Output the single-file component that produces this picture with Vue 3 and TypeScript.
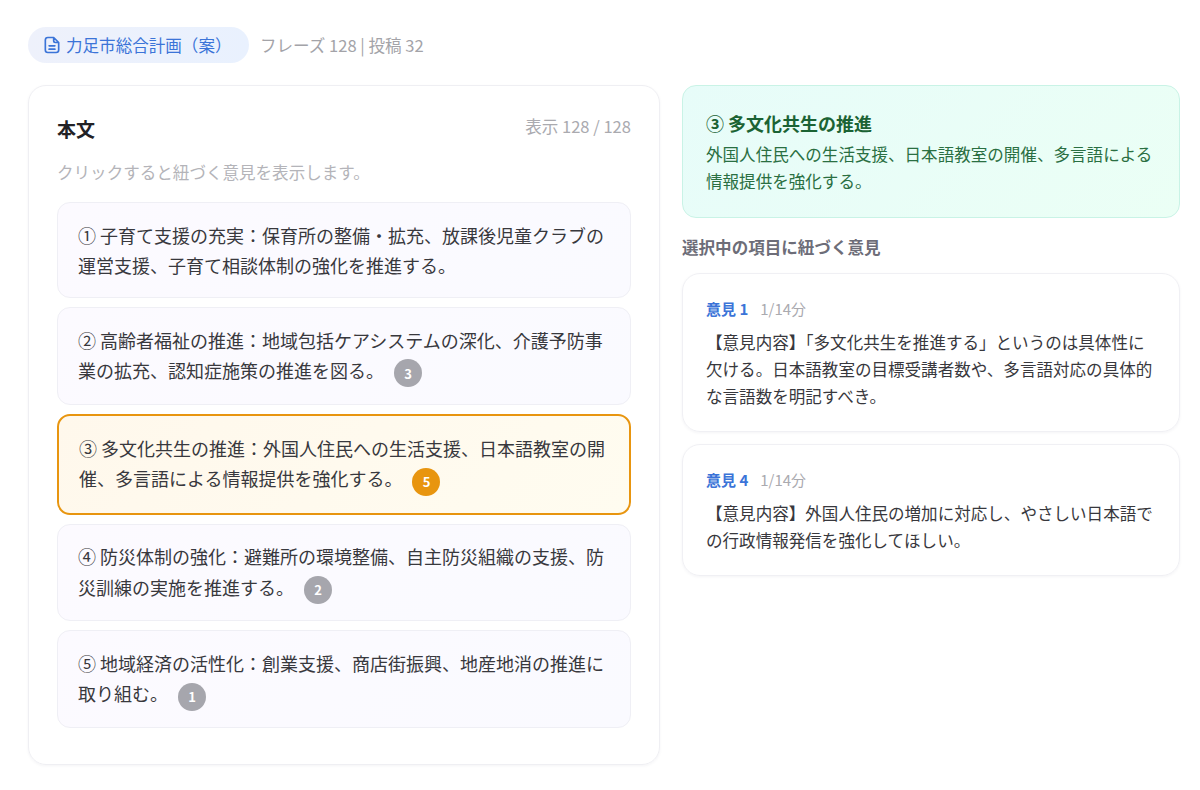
<template>
  <div class="page">
    <header class="top">
      <div class="doc-pill">
        <svg class="doc-icon" viewBox="0 0 24 24">
          <path
            d="M14 3H7a3 3 0 0 0-3 3v12a3 3 0 0 0 3 3h10a3 3 0 0 0 3-3V9z M14 3v4a2 2 0 0 0 2 2h4 M8.5 13h7 M8.5 17h7"
            fill="none"
            stroke="currentColor"
            stroke-width="2"
            stroke-linecap="round"
            stroke-linejoin="round"
          />
        </svg>
        <span>力足市総合計画（案）</span>
      </div>
      <span class="stats">フレーズ 128 | 投稿 32</span>
    </header>

    <main class="columns">
      <section class="body-card">
        <div class="body-head">
          <h2>本文</h2>
          <span class="count">表示 128 / 128</span>
        </div>
        <p class="hint">クリックすると紐づく意見を表示します。</p>

        <div class="phrases">
          <div
            v-for="phrase in PHRASES"
            :key="phrase.id"
            class="phrase"
            :class="{ selected: phrase.id === selectedId }"
          >
            {{ phrase.text }}<span v-if="phrase.count" class="badge">{{ phrase.count }}</span>
          </div>
        </div>
      </section>

      <aside class="side">
        <div class="summary">
          <h3>③ 多文化共生の推進</h3>
          <p>外国人住民への生活支援、日本語教室の開催、多言語による情報提供を強化する。</p>
        </div>

        <h4 class="side-title">選択中の項目に紐づく意見</h4>

        <article v-for="op in OPINIONS" :key="op.label" class="opinion">
          <div class="opinion-head">
            <span class="opinion-label">{{ op.label }}</span>
            <span class="opinion-time">{{ op.time }}</span>
          </div>
          <p>{{ op.text }}</p>
        </article>
      </aside>
    </main>
  </div>
</template>

<script setup lang="ts">
const selectedId = 3;

const PHRASES = [
  { id: 1, text: '① 子育て支援の充実：保育所の整備・拡充、放課後児童クラブの運営支援、子育て相談体制の強化を推進する。', count: 0 },
  { id: 2, text: '② 高齢者福祉の推進：地域包括ケアシステムの深化、介護予防事業の拡充、認知症施策の推進を図る。', count: 3 },
  { id: 3, text: '③ 多文化共生の推進：外国人住民への生活支援、日本語教室の開催、多言語による情報提供を強化する。', count: 5 },
  { id: 4, text: '④ 防災体制の強化：避難所の環境整備、自主防災組織の支援、防災訓練の実施を推進する。', count: 2 },
  { id: 5, text: '⑤ 地域経済の活性化：創業支援、商店街振興、地産地消の推進に取り組む。', count: 1 }
];

const OPINIONS = [
  {
    label: '意見 1',
    time: '1/14分',
    text: '【意見内容】「多文化共生を推進する」というのは具体性に欠ける。日本語教室の目標受講者数や、多言語対応の具体的な言語数を明記すべき。'
  },
  {
    label: '意見 4',
    time: '1/14分',
    text: '【意見内容】外国人住民の増加に対応し、やさしい日本語での行政情報発信を強化してほしい。'
  }
];
</script>

<style>
html,
body {
  background: #fff;
}
</style>

<style scoped>
.page {
  width: 1200px;
  height: 790px;
  box-sizing: border-box;
  padding: 27px 20px 0 28px;
  font-family: "Noto Sans CJK JP", "Noto Sans", sans-serif;
  color: #333338;
  overflow: hidden;
}

.top {
  display: flex;
  align-items: center;
  gap: 11px;
  height: 36px;
}

.doc-pill {
  box-sizing: border-box;
  display: flex;
  align-items: center;
  gap: 4px;
  width: 221px;
  height: 36px;
  padding-left: 14px;
  border-radius: 18px;
  background: linear-gradient(90deg, #eef1fb, #e9f1fe);
  color: #3b74d8;
  font-size: 16.56px;
}

.doc-icon {
  width: 20px;
  height: 20px;
}

.stats {
  font-size: 16.56px;
  color: #a3a3a8;
}

.columns {
  display: flex;
  align-items: flex-start;
  gap: 22px;
  margin-top: 22px;
}

.body-card {
  box-sizing: border-box;
  width: 632px;
  height: 680px;
  padding: 28px 28px 0;
  border: 1px solid #efeff3;
  border-radius: 18px;
  box-shadow: 0 1px 3px rgba(40, 40, 80, 0.05);
}

.body-head {
  display: flex;
  justify-content: space-between;
  align-items: flex-start;
}

.body-head h2 {
  margin: 0;
  font-size: 19px;
  line-height: 30px;
  font-weight: 700;
  color: #222226;
}

.count {
  font-size: 16.56px;
  line-height: 24px;
  color: #aaaaaf;
}

.hint {
  margin: 16px 0 0;
  font-size: 16.56px;
  line-height: 24px;
  color: #b4b4b9;
}

.phrases {
  display: flex;
  flex-direction: column;
  gap: 9px;
  margin-top: 18px;
}

.phrase {
  box-sizing: border-box;
  padding: 16.5px 20px;
  border: 1px solid #efeff5;
  border-radius: 13px;
  background: linear-gradient(135deg, #fcfaff, #fafaff);
  font-size: 18px;
  line-height: 30.6px;
  color: #38383d;
}

.phrase.selected {
  padding: 17px 20px;
  border: 2px solid #e8950f;
  background: linear-gradient(135deg, #fff8ec, #fffcf0);
}

.badge {
  display: inline-flex;
  align-items: center;
  justify-content: center;
  width: 28px;
  height: 28px;
  margin-left: 10px;
  border-radius: 50%;
  background: #a6a6ad;
  color: #fff;
  font-size: 13px;
  font-weight: 700;
  line-height: 1;
  vertical-align: middle;
}

.phrase.selected .badge {
  background: #e8950f;
}

.side {
  flex: 1;
  min-width: 0;
}

.summary {
  box-sizing: border-box;
  height: 133px;
  padding: 24px 23px;
  border: 1px solid #c9f3e6;
  border-radius: 14px;
  background: linear-gradient(135deg, #e7fcf9, #ebfff5);
  color: #2a6f42;
}

.summary h3 {
  margin: 0;
  font-size: 18px;
  line-height: 26px;
  font-weight: 700;
  color: #1b6334;
}

.summary p {
  margin: 5px 0 0;
  font-size: 16.56px;
  line-height: 27px;
}

.side-title {
  margin: 17px 0 0;
  font-size: 16.56px;
  line-height: 24px;
  font-weight: 600;
  color: #6d6d78;
}

.opinion {
  box-sizing: border-box;
  padding: 22px 23px 21px;
  margin-top: 12px;
  border: 1px solid #f0f0f4;
  border-radius: 18px;
  box-shadow: 0 1px 3px rgba(40, 40, 80, 0.05);
}

.side-title + .opinion {
  margin-top: 14px;
}

.opinion-head {
  display: flex;
  align-items: center;
  gap: 12px;
  height: 24px;
}

.opinion-label {
  font-size: 15px;
  font-weight: 700;
  color: #3b74d8;
}

.opinion-time {
  font-size: 15px;
  color: #aaaaaf;
}

.opinion p {
  margin: 8.5px 0 0;
  font-size: 16.56px;
  line-height: 27.3px;
  color: #38383d;
}
</style>
